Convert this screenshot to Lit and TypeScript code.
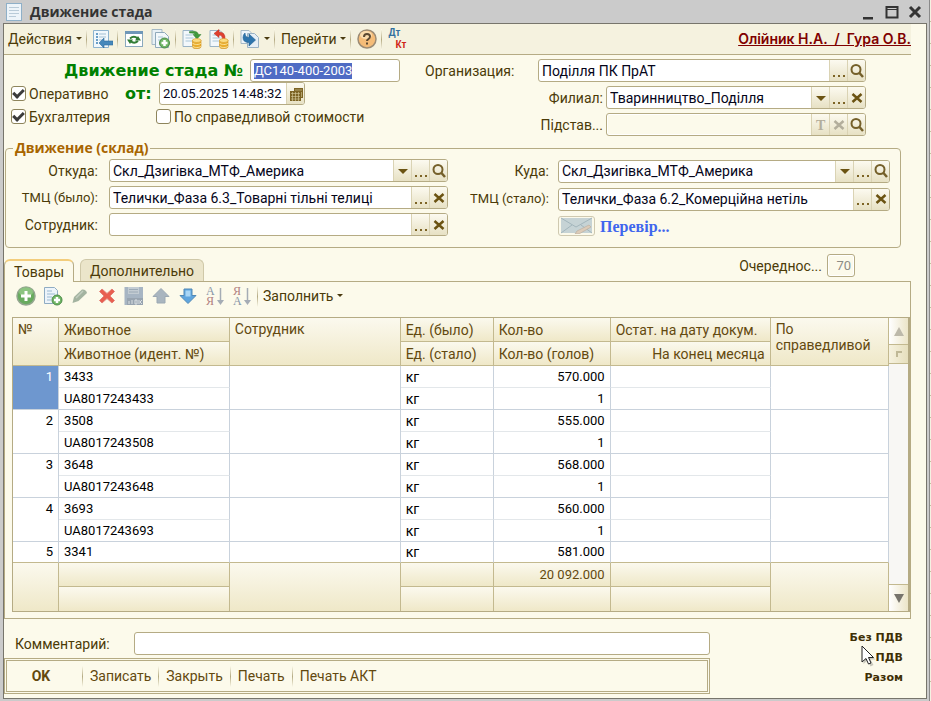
import { LitElement, html, svg, css, nothing } from "lit";
import { customElement, query } from "lit/decorators.js";

const icon = (body: unknown, w = 20, h = 20) =>
  html`<svg width=${w} height=${h} viewBox="0 0 ${w} ${h}" aria-hidden="true">${body}</svg>`;

const sheet = (x: number, y: number) => svg`
  <path d="M${x} ${y}h10l3 3v13h-13z" fill="#f3f8fb" stroke="#9ab4c6"/>
  <path d="M${x + 2.5} ${y + 4.5}h7M${x + 2.5} ${y + 7.5}h8M${x + 2.5} ${y + 10.5}h8" stroke="#a9c6d8"/>`;

const coins = svg`
  <path d="M10.500 11v6.500c0 3 8.500 3 8.500 0v-6.500z" fill="#e9ac2c" stroke="#c98a1a" stroke-width=".6"/>
  <path d="M10.500 14c1 2 7.500 2 8.500 0M10.500 17c1 2 7.500 2 8.500 0" fill="none" stroke="#fbe29a"/>
  <ellipse cx="14.750" cy="11.500" rx="4.250" ry="2" fill="#fbdc83" stroke="#d79c2b" stroke-width=".6"/>`;

const plus = (cx: number, cy: number, r: number) => svg`
  <circle cx=${cx} cy=${cy} r=${r} fill="#6fb565" stroke="#4c8b48"/>
  <path d="M${cx - r + 2} ${cy}h${2 * r - 4}M${cx} ${cy - r + 2}v${2 * r - 4}" stroke="#fff" stroke-width="2.500"/>`;

const icons = {
  form: icon(svg`
    <rect x="1.500" y=".5" width="15" height="17" fill="#edf4f9" stroke="#8fb0c8"/>
    <path d="M4 4.500h10M4 7.500h10M4 10.500h10M4 13.500h7" stroke="#b9cbd8"/>`, 18, 18),
  post: icon(svg`
    <path d="M.5 1.500h15v17h-15z" fill="#f1f8fc" stroke="#8db3ce"/>
    <path d="M3 5h2M3 8h2M3 11h2M3 14h2" stroke="#3f81b5" stroke-width="1.500"/>
    <path d="M6 5h7M6 8h7M6 11h5" stroke="#a3bfd2"/>
    <path d="M6 14l5-5v3h9v4h-9v3z" fill="#4688bb" stroke="#2e6c9e" stroke-width=".6"/>`),
  refresh: icon(svg`
    <rect x="1.500" y="2.500" width="17" height="15" fill="#fff" stroke="#8ba9bd"/>
    <rect x="1" y="2" width="18" height="3" fill="#6f97b8"/>
    <path d="M6 9.500q4-3.500 7.500 0M14 12q-4 3.500-7.500 0" fill="none" stroke="#327d35" stroke-width="2"/>
    <path d="M11 11.500h6l-3-4.500zM3 10.500h6l-3 4.500z" fill="#327d35" transform="rotate(0)"/>`),
  copy: icon(svg`
    <path d="M1 .5h10v15h-10z" fill="#e8f0f5" stroke="#a5b9c6"/>
    <path d="M4.500 3.500h9l4 4v11h-13z" fill="#f3f8fb" stroke="#8fa9bb"/>
    <path d="M7 8h5M7 11h3" stroke="#a9c6d8"/>${plus(13.5, 14, 5)}`),
  postDoc: icon(svg`${sheet(1, 1.5)}
    <path d="M7.500 2.500q8-1.500 9 3h2.500l-4 4.500-4-4.500h2.500q-1-2-6-1.500z" fill="#3f9a3c" stroke="#2f7a30" stroke-width=".5"/>${coins}`),
  unpost: icon(svg`${sheet(1, 1.5)}
    <path d="M5 4.500l5-4v2.500q6.500 0 6 7h-2.500q0-4-3.500-4v2.500z" fill="#e0402f" stroke="#b52b20" stroke-width=".5"/>${coins}`),
  basis: icon(svg`
    <path d="M1 1.500h8l2 2v11h-10z" fill="#eef5fa" stroke="#a5b9c6"/>
    <path d="M7.500 4.500h7l4 4v10h-11z" fill="#e6eff6" stroke="#9ab2c4"/>
    <path d="M5 4q0 4.500 4 4.500v-3.500l6.500 6-6.500 6v-3.500q-6 0-6-5 0-3 2-4.500z" fill="#2e75ad" stroke="#1f5f92" stroke-width=".6"/>`),
  help: icon(svg`
    <circle cx="10" cy="10" r="9" fill="#f5bc78" stroke="#9c8b74" stroke-width="1.500"/>
    <ellipse cx="9" cy="6" rx="6" ry="4" fill="#fbdcae"/>
    <path d="M7 8q0-3 3-3t3 2.500q0 1.500-1.500 2.500t-1.500 2" fill="none" stroke="#5d4a33" stroke-width="2"/>
    <rect x="9" y="13.500" width="2" height="2" fill="#5d4a33"/>`),
  add: icon(svg`
    <circle cx="10" cy="10" r="9" fill="#68ab5f" stroke="#93a78f" stroke-width="1.500"/>
    <ellipse cx="10" cy="6" rx="7" ry="4.500" fill="#8cc481"/>
    <path d="M5 10h10M10 5v10" stroke="#fff" stroke-width="3"/>`),
  addCopy: icon(svg`
    <path d="M1.500 1.500h10l3 3v13h-13z" fill="#edf4fa" stroke="#8facc3"/>
    <path d="M4 5h5M4 8h8M4 11h5M4 14h4" stroke="#9bbad2"/>${plus(14, 14, 5)}`),
  pencil: icon(svg`
    <path d="M2.500 17l1.500-6 8-7.500q4-.5 5 3.500l-8.500 8z" fill="#a3b3a0"/>
    <path d="M6 12l7-7" stroke="#c2cdbf" stroke-width="1.500"/>`),
  remove: icon(svg`
    <path d="M2.500 5.500L5 3l5 4.500L15 3l2.500 2.500L13 10l4.500 4.500L15 17l-5-4.500L5 17l-2.500-2.500L7 10z" fill="#e85f50" stroke="#e38078"/>`),
  save: icon(svg`
    <path d="M.5 1h18.500v18h-18.500z" fill="#a7b5c3"/>
    <path d="M4 1h11v7h-11z" fill="#c3ccd3"/><path d="M5 3.500h9M5 6h9" stroke="#9caab6"/>
    <path d="M3 12h16v7h-16z" fill="#98a4b0"/>
    <path d="M5 15v3M8 14v4M11 14h2v4h-2zM15 14v4M18 14l-2 2 2 2" fill="none" stroke="#dbe0e4"/>`),
  up: icon(svg`<path d="M10 2.500l8 8h-4v6.500h-8v-6.500h-4z" fill="#a9b5bf" stroke="#9ba8b3"/>`),
  down: icon(svg`
    <path d="M10 17.500l8-8h-4v-6.500h-8v6.500h-4z" fill="#5fa5de" stroke="#5289b5"/>
    <path d="M7.500 4.500h5v6h-5z" fill="#a9d6f6"/>`),
  sortAsc: icon(svg`
    <text x="1" y="9" class="g1">А</text><text x="1" y="19" class="g2">Я</text>
    <path d="M15.500 2v14" stroke="#a5acb5" stroke-width="1.500"/><path d="M12 14h7l-3.500 5z" fill="#a5acb5"/>`),
  sortDesc: icon(svg`
    <text x="1" y="9" class="g2">Я</text><text x="1" y="19" class="g1">А</text>
    <path d="M15.500 2v14" stroke="#a5acb5" stroke-width="1.500"/><path d="M12 14h7l-3.500 5z" fill="#a5acb5"/>`),
  search: icon(svg`
    <circle cx="6" cy="5.500" r="4.500" fill="none" stroke="#75602a" stroke-width="2"/>
    <path d="M9 8.500l4 4.500" stroke="#75602a" stroke-width="2.500"/>`, 14, 14),
  clear: icon(svg`<path d="M2.500 3l9 8M11.500 3l-9 8" stroke="currentColor" stroke-width="2.500"/>`, 14, 14),
  drop: icon(svg`<path d="M2 5h10l-5 5z" fill="#6b5312"/>`, 14, 14),
  dots: icon(svg`<path d="M1 11h2v2h-2zM6 11h2v2h-2zM11 11h2v2h-2z" fill="#7d6425"/>`, 14, 14),
  text: icon(svg`<text x="2" y="12" class="tt">T</text>`, 14, 14),
  calendar: icon(svg`
    <path d="M5 1h9v10h-2v3h-11v-10h4z" fill="#7d6425"/>
    <path d="M2 6.500h9M2 9.500h9M2 12h9M3.500 5v9M6.500 5v9M9.500 5v9M6 3h7M12.500 5v5" stroke="#d8cd9e" stroke-width=".6"/>`, 14, 14),
  caret: icon(svg`<path d="M0 0h6l-3 3z" fill="#4a3a10"/>`, 6, 4),
};

type Btn = "drop" | "dots" | "search" | "clear" | "text" | "calendar";
const names: Record<Btn, string> = {
  drop: "Список", dots: "Выбрать", search: "Открыть", clear: "Очистить", text: "Тип", calendar: "Календарь",
};

const animals = [
  ["3433", "UA8017243433", "570.000"],
  ["3508", "UA8017243508", "555.000"],
  ["3648", "UA8017243648", "568.000"],
  ["3693", "UA8017243693", "560.000"],
  ["3341", "", "581.000"],
];

@customElement("app-root")
export class AppRoot extends LitElement {
  @query("#number") numberInput!: HTMLInputElement;

  firstUpdated() {
    this.numberInput.focus();
    this.numberInput.select();
  }

  box(id: string, value: string, buttons: Btn[] = [], cls = "") {
    const off = cls.includes("off");
    return html`<div class="box ${cls}">
      <input id=${id} type="text" .value=${value} ?disabled=${off} />
      ${buttons.map((b) => html`<button class="pick ${off && b !== "search" ? "dim" : ""}" aria-label=${names[b]}>${icons[b]}</button>`)}
    </div>`;
  }

  field(cls: string, id: string, label: string, value: string, buttons: Btn[], boxCls = "") {
    return html`<div class="field ${cls}"><label for=${id}>${label}</label>${this.box(id, value, buttons, boxCls)}</div>`;
  }

  tool(name: string, glyph: unknown) {
    return html`<button class="tool" aria-label=${name}>${glyph}</button>`;
  }

  row(a: string[], i: number) {
    const whole = a[1] !== "";
    const span = whole ? 2 : 1;
    return html`<tr class=${whole ? "" : "cut"}>
        <td rowspan=${span} class="num ${i ? "" : "current"}">${i + 1}</td>
        <td class="first">${a[0]}</td><td rowspan=${span}></td><td class="first cyr">кг</td>
        <td class="first num">${a[2]}</td><td class="first"></td><td rowspan=${span}></td>
      </tr>
      ${whole ? html`<tr><td>${a[1]}</td><td class="cyr">кг</td><td class="num">1</td><td></td></tr>` : nothing}`;
  }

  render() {
    return html`
      <div class="window">
        <header class="title">
          ${icons.form}<h1>Движение стада</h1>
          <button aria-label="Свернуть">${icon(svg`<path d="M2 13h10v2.500h-10z" fill="#333"/>`, 16, 16)}</button>
          <button aria-label="Развернуть">${icon(svg`<path d="M2.500 3h11v10.500h-11z" fill="none" stroke="#333" stroke-width="2"/><path d="M2 5.500h12" stroke="#333"/>`, 16, 16)}</button>
          <button aria-label="Закрыть">${icon(svg`<path d="M3 3l10 10M13 3L3 13" stroke="#333" stroke-width="3"/>`, 16, 16)}</button>
        </header>
        <main>
          <nav class="bar">
            <button class="menu">Действия ${icons.caret}</button><i></i>
            ${this.tool("Записать", icons.post)}<i></i>
            ${this.tool("Обновить", icons.refresh)}${this.tool("Скопировать", icons.copy)}<i></i>
            ${this.tool("Провести", icons.postDoc)}${this.tool("Отмена проведения", icons.unpost)}<i></i>
            <button class="menu" aria-label="Ввести на основании">${icons.basis}${icons.caret}</button><i></i>
            <button class="menu">Перейти ${icons.caret}</button><i></i>
            ${this.tool("Справка", icons.help)}<i></i>
            <button class="dtkt"><b>Дт</b><b>Кт</b></button>
            <a class="users" href="#">Олійник Н.А.  /  Гура О.В.</a>
          </nav>

          <section class="head">
            <div class="left">
              <div class="line"><label class="caption" for="number">Движение стада №</label>${this.box("number", "ДС140-400-2003", [], "digits number")}</div>
              <div class="line">
                <label class="check oper"><input type="checkbox" checked />Оперативно</label>
                <label class="from" for="date">от:</label>${this.box("date", "20.05.2025 14:48:32", ["calendar"], "digits date")}
              </div>
              <div class="line">
                <label class="check acc"><input type="checkbox" checked />Бухгалтерия</label>
                <label class="check"><input type="checkbox" />По справедливой стоимости</label>
              </div>
            </div>
            <div class="right">
              ${this.field("org", "org", "Организация:", "Поділля ПК ПрАТ", ["dots", "search"])}
              ${this.field("sub", "branch", "Филиал:", "Тваринництво_Поділля", ["drop", "dots", "clear"])}
              ${this.field("sub", "reason", "Підстав...", "", ["text", "clear", "search"], "off")}
            </div>
          </section>

          <fieldset>
            <legend>Движение (склад)</legend>
            <div>
              ${this.field("", "src", "Откуда:", "Скл_Дзигівка_МТФ_Америка", ["drop", "dots", "search"])}
              ${this.field("tight", "was", "ТМЦ (было):", "Телички_Фаза 6.3_Товарні тільні телиці", ["dots", "clear"])}
              ${this.field("", "emp", "Сотрудник:", "", ["dots", "clear"])}
            </div>
            <div class="to">
              ${this.field("", "dst", "Куда:", "Скл_Дзигівка_МТФ_Америка", ["drop", "dots", "search"])}
              ${this.field("tight", "now", "ТМЦ (стало):", "Телички_Фаза 6.2_Комерційна нетіль", ["dots", "clear"])}
              <div class="verify">
                <button class="mail" aria-label="Письмо">${icon(svg`
                  <rect x="1" y="1" width="31" height="15" fill="#c6d3d5"/>
                  <path d="M1 1l15 9 16-9M1 16l11-8M32 16l-11-8" fill="none" stroke="#a3b6bc"/>
                  <path d="M15 17l2-3 12-6 2 2-12 7z" fill="#dccbb8" stroke="#b9ab9b" stroke-width=".6"/>`, 33, 17)}</button>
                <a href="#">Перевір...</a>
              </div>
            </div>
          </fieldset>

          <div class="tabs" role="tablist">
            <button role="tab" aria-selected="true" class="tab on">Товары</button>
            <button role="tab" aria-selected="false" class="tab">Дополнительно</button>
            <label for="order">Очереднос...</label>${this.box("order", "70", [], "digits order off")}
          </div>

          <section class="panel">
            <div class="grid-bar">
              ${this.tool("Добавить", icons.add)}${this.tool("Добавить копированием", icons.addCopy)}
              ${this.tool("Изменить", icons.pencil)}${this.tool("Удалить", icons.remove)}
              ${this.tool("Закончить редактирование", icons.save)}${this.tool("Вверх", icons.up)}
              ${this.tool("Вниз", icons.down)}${this.tool("По возрастанию", icons.sortAsc)}
              ${this.tool("По убыванию", icons.sortDesc)}<i></i>
              <button class="menu">Заполнить ${icons.caret}</button>
            </div>
            <div class="grid">
              <table>
                <colgroup><col class="c1" /><col class="c2" /><col class="c2" /><col class="c4" /><col class="c5" /><col class="c6" /><col class="c7" /></colgroup>
                <thead>
                  <tr><th rowspan="2">№</th><th>Животное</th><th rowspan="2">Сотрудник</th><th>Ед. (было)</th><th>Кол-во</th><th>Остат. на дату докум.</th><th rowspan="2">По справедливой</th></tr>
                  <tr><th>Животное (идент. №)</th><th>Ед. (стало)</th><th>Кол-во (голов)</th><th class="end">На конец месяца</th></tr>
                </thead>
                <tbody>${animals.map((a, i) => this.row(a, i))}</tbody>
                <tfoot>
                  <tr><td rowspan="2"></td><td></td><td rowspan="2"></td><td></td><td class="num">20 092.000</td><td></td><td rowspan="2"></td></tr>
                  <tr><td></td><td></td><td></td><td></td></tr>
                </tfoot>
              </table>
              <div class="scroll">
                <button class="s-up" aria-label="Вверх">${icon(svg`<path d="M5 0l5 9h-10z" fill="#bdb9aa"/>`, 10, 9)}</button>
                <div class="thumb">${icon(svg`<path d="M0 0h6v2h-4v4h-2z" fill="#bfb896"/>`, 6, 6)}</div>
                <div class="track"></div>
                <button class="s-down" aria-label="Вниз">${icon(svg`<path d="M0 0h10l-5 9z" fill="#77746c"/>`, 10, 9)}</button>
              </div>
            </div>
          </section>

          <footer>
            <div class="bottom">
              <div class="comment"><label for="comment">Комментарий:</label>${this.box("comment", "")}</div>
              <div class="actions"><div>
                <button class="ok">OK</button><i></i><button>Записать</button><i></i><button>Закрыть</button><i></i><button>Печать</button><i></i><button>Печать АКТ</button>
              </div></div>
            </div>
            <div class="totals"><span>Без ПДВ</span><span>ПДВ</span><span>Разом</span>
              <svg class="pointer" width="16" height="22" viewBox="0 0 16 22" aria-hidden="true">
                <path d="M2.500 3v16l4-3.500 3 6 3-1.500-3-5.500h5z" fill="#0003"/>
                <path d="M1 1v16l4-3.500 2.500 5.500 2.500-1-2.500-5.500h5z" fill="#fff" stroke="#222"/>
              </svg>
            </div>
          </footer>
        </main>
      </div>
      <div class="behind"></div>`;
  }

  static styles = css`
    :host { display: flex; min-height: 100vh; background: #cbcbcb; color: #4b3a08; font: 14px/16px Roboto, "Liberation Sans", sans-serif; }
    * { box-sizing: border-box; }
    svg { display: block; flex: none; }
    button, input { font: inherit; color: inherit; }
    button { background: none; border: 0; padding: 0; white-space: nowrap; display: flex; align-items: center; justify-content: center; }
    .window { flex: 1; min-width: 0; display: flex; flex-direction: column; padding: 0 2px 2px 3px; }
    .behind { flex: none; width: 2px; border-left: 1px solid #8a8a8a; background: repeating-linear-gradient(#f4f2e2 0 21px, #c4bf9f 21px 22px); }
    .title { display: flex; align-items: center; height: 23px; gap: 7px; padding: 0 4px 0 2px; }
    h1 { margin: 0; flex: 1; font: bold 14px/16px "Open Sans", sans-serif; color: #333; }
    main { flex: 1; background: #fcfaeb; border: 1px solid #77756c; padding-bottom: 4px; }

    i { width: 1px; height: 21px; background: linear-gradient(#fcfaeb, #b5ab84, #fcfaeb); }
    .tool { width: 20px; height: 20px; }
    .menu { gap: 4px; height: 20px; }
    .bar { display: flex; align-items: center; gap: 7px; height: 31px; margin-right: 15px; padding-left: 4px; background: #f5f2df; border-bottom: 1px solid #b5ab84; }
    .bar i { margin: 0 -1px 0 -3px; }
    .dtkt { display: grid; font: bold 10px/12px "Liberation Sans", sans-serif; color: #33709f; }
    .dtkt b { text-align: left; }
    .dtkt b + b { color: #cf2417; padding-left: 7px; }
    .users { margin-left: auto; color: #800000; font: 600 14px/16px Inter, sans-serif; white-space: pre; }

    .head { display: flex; padding: 4px 60px 0 7px; }
    .left { flex: 1 1 414px; }
    .right { flex: 1 1 441px; display: grid; gap: 4px; align-content: start; }
    .line { display: flex; align-items: center; height: 23px; }
    .caption, .from { color: #008000; font: bold 16px/18px "DejaVu Sans", sans-serif; }
    .caption { margin-left: 53px; width: 186px; white-space: nowrap; }
    .from { width: 34px; }
    .number { width: 150px; }
    .date { width: 146px; }
    .check { display: flex; align-items: center; gap: 3px; }
    .oper { width: 114px; }
    .acc { width: 145px; }
    .check input { appearance: none; margin: 0; width: 15px; height: 15px; background: #fff; border: 1px solid #8e855c; border-radius: 3px; display: grid; place-items: center; }
    .check input:checked::before { content: ""; width: 8px; height: 4px; border: solid #3b3b3b; border-width: 0 0 3px 3px; rotate: -45deg; margin-bottom: 3px; }

    .box { display: flex; height: 23px; background: #fff; border: 1px solid #b5ab84; border-radius: 3px; overflow: hidden; flex: 1; min-width: 0; }
    .box.number, .box.date, .box.order { flex: none; }
    .box input { flex: 1; min-width: 0; width: 0; border: 0; outline: 0; padding: 0 3px; background: none; color: #05051a; }
    .box input::selection { background: #4f6cc4; color: #fff; }
    .digits input { font-size: 13px; }
    .off { background: #fcfaeb; box-shadow: inset 0 0 0 1px #fff; }
    .box.off input { color: #8c8c85; }
    .pick { width: 18px; background: linear-gradient(#fcfaf0, #e7e1c4); border-left: 1px solid #dad3b4; color: #6b5312; }
    .pick.dim { color: #b3ae9c; }
    .tt { font: bold 14px "Liberation Serif", serif; fill: #b3ae9c; }
    .g1, .g2 { font: 12px "Liberation Serif", serif; fill: #8696a8; }
    .g2 { fill: #b07f7f; }

    .field { display: grid; grid-template-columns: 92px 1fr; gap: 11px; align-items: center; }
    .field label { text-align: right; white-space: nowrap; }
    .tight label { font-size: 13px; }
    .org { grid-template-columns: 113px 1fr; gap: 0; }
    .field.org label { text-align: left; }
    .sub { grid-template-columns: 178px 1fr; gap: 3px; }

    fieldset { margin: 5px 25px 0 1px; padding: 4px 10px 11px 0; border: 1px solid #b5ab84; border-radius: 4px; display: grid; grid-template-columns: 1fr 1fr; }
    fieldset > div { display: grid; gap: 4px; }
    legend { margin-left: 7px; padding: 0 2px; color: #a86500; font: bold 14px/14px "Open Sans", sans-serif; }
    .to .field { grid-template-columns: 101px 1fr; gap: 9px; }
    .verify { display: flex; align-items: center; gap: 5px; padding-left: 110px; }
    .mail { width: 37px; height: 20px; border: 1px solid #cfc9b0; border-radius: 3px; }
    .verify a { align-self: flex-end; color: #3f66ee; font: bold 16px/18px "Liberation Serif", serif; text-decoration: none; }

    .tabs { display: flex; align-items: flex-end; margin: 5px 71px 0 0; height: 28px; position: relative; }
    .tab { height: 22px; padding: 0 9px; border: 1px solid #cfc8a8; border-bottom: 0; border-radius: 6px 6px 0 0; background: #ebe5ca; margin-right: 6px; }
    .tab.on { height: 23px; margin-bottom: -1px; background: #fcfaeb; border-color: #b5ab84; border-top: 2px solid #f3cd7c; z-index: 1; }
    .tabs label { margin: 0 5px 7px auto; }
    .box.order { width: 28px; margin-bottom: 4px; }
    .order input { text-align: right; }

    .panel { margin-right: 15px; border: 1px solid #b5ab84; padding: 0 0 6px 7px; }
    .grid-bar { display: flex; align-items: flex-start; gap: 7px; height: 35px; padding: 4px 0 0 4px; }
    .grid-bar i { margin: 0 -2px; }
    .grid { display: flex; border: 1px solid #b5ab84; border-right-width: 2px; }
    table { flex: 1; border-collapse: separate; border-spacing: 0; table-layout: fixed; width: 0; }
    .c1 { width: 46px; } .c2 { width: 19.5%; } .c4 { width: 93px; } .c5 { width: 117px; } .c6 { width: 160px; }
    th, td { padding: 0 5px; border-right: 1px solid #c9d2dc; border-bottom: 1px solid #c9d2dc; text-align: left; font-weight: normal; white-space: nowrap; overflow: hidden; }
    th { height: 24px; color: #63490f; border-color: #c3b98f; background: linear-gradient(#fbf9ee, #efe8c8); }
    th[rowspan] { vertical-align: top; padding-top: 3px; white-space: normal; }
    th.end { text-align: right; }
    td { height: 22px; background: #fff; color: #000; font-size: 13px; }
    td[rowspan="2"] { vertical-align: top; padding-top: 3px; }
    .first { border-bottom-color: #e3e7ea; }
    .cyr { font-size: 14px; }
    .num { text-align: right; }
    .cut td { height: 21px; border-bottom-color: #c3b98f; }
    td.current { background: #6e97cf; color: #fff; }
    tfoot td { height: 24px; color: #63490f; border-color: #c3b98f; background: linear-gradient(#fbf9ee, #efe8c8); }
    tfoot tr:last-child td, tfoot td[rowspan] { border-bottom: 0; }
    .scroll { width: 19px; display: flex; flex-direction: column; }
    .s-up, .s-down { height: 26px; background: linear-gradient(90deg, #fff, #ece5c8); }
    .thumb { height: 20px; display: grid; place-items: center; background: linear-gradient(90deg, #f6f2df, #e6dfbd); border: solid #c3b98f; border-width: 1px 0; }
    .track { flex: 1; background: #f8f7f4; border-bottom: 1px solid #c3b98f; }

    footer { display: flex; margin-top: 9px; padding-right: 23px; justify-content: space-between; }
    .bottom { flex: 0 1 706px; padding-top: 4px; }
    .comment { display: flex; align-items: center; padding-left: 11px; }
    .comment label { width: 119px; }
    .actions { margin-top: 3px; padding: 1px; border: 1px solid #b5ab84; }
    .actions > div { display: flex; align-items: center; gap: 7px; height: 32px; border: 1px solid #b5ab84; }
    .actions button { color: #63490f; height: 24px; }
    .actions .ok { width: 68px; font-weight: bold; }
    .totals { position: relative; display: flex; flex-direction: column; text-align: right; color: #3f2f04; font: bold 11px/20px "DejaVu Sans", sans-serif; }
    .pointer { position: absolute; left: 11px; top: 17px; }
  `;
}
